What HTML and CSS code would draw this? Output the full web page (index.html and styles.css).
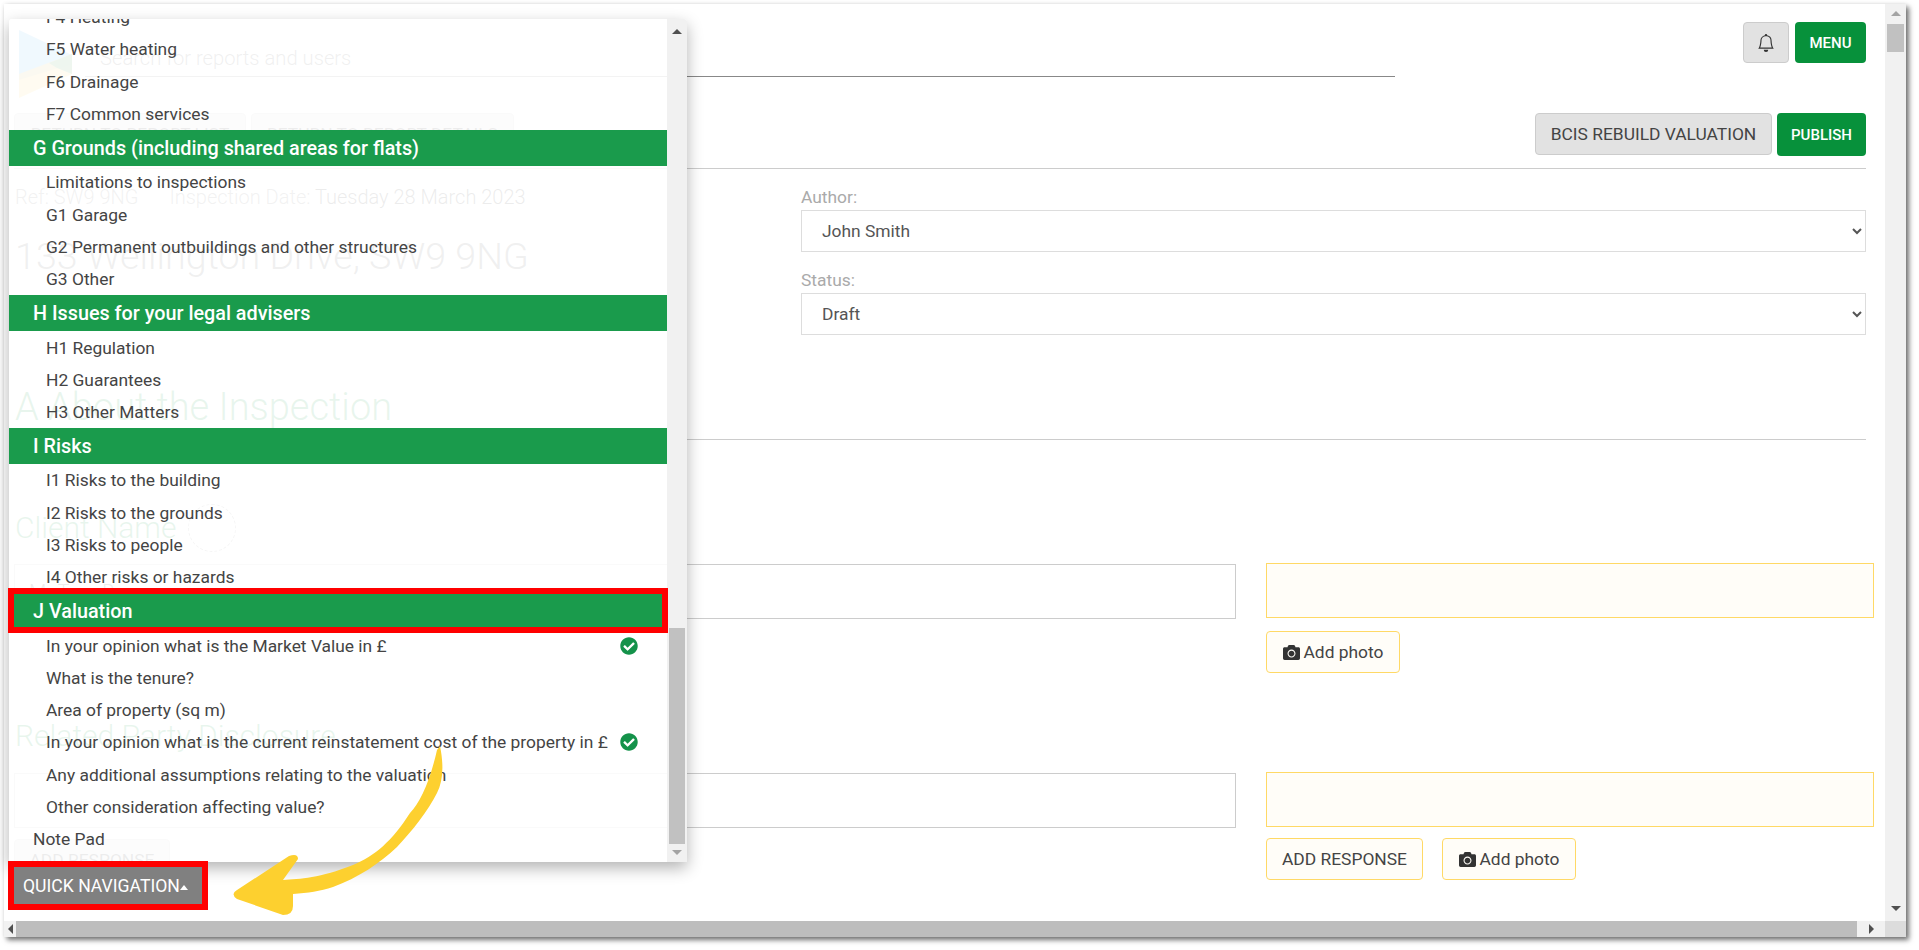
FILE: index.html
```html
<!DOCTYPE html>
<html lang="en">
<head>
    <meta charset="UTF-8">
    <title>Report editor - Quick navigation</title>
    <link rel="stylesheet" href="styles.css">
</head>
<body>
<div class="window">
    <div class="page">
        <div class="topbar">
            <svg class="logo" width="53" height="68" viewBox="0 0 53 68">
                <polygon points="0,0 53,25 53,34 0,50" fill="#2e9fe6" opacity="0.7"/>
                <polygon points="0,44 53,24 53,44 0,68" fill="#ffc83a" opacity="0.7"/>
                <polygon points="30,33 53,24 53,44 38,38" fill="#2f9a58" opacity="0.8"/>
            </svg>
            <div class="search">
                <input type="text" placeholder="Search for reports and users">
            </div>
            <div class="top-actions">
                <button class="btn btn-bell">
                    <svg width="18" height="18" viewBox="0 0 16 16"><path fill="#333" d="M8 16a2 2 0 0 0 2-2H6a2 2 0 0 0 2 2zM8 1.918l-.797.161A4.002 4.002 0 0 0 4 6c0 .628-.134 2.197-.459 3.742-.16.767-.376 1.566-.663 2.258h10.244c-.287-.692-.502-1.49-.663-2.258C12.134 8.197 12 6.628 12 6a4.002 4.002 0 0 0-3.203-3.92L8 1.917zM14.22 12c.223.447.481.801.78 1H1c.299-.199.557-.553.78-1C2.68 10.2 3 6.88 3 6c0-2.42 1.72-4.44 4.005-4.901a1 1 0 1 1 1.99 0A5.002 5.002 0 0 1 13 6c0 .88.32 4.2 1.22 6z"/></svg>
                </button>
                <button class="btn btn-green btn-menu">MENU</button>
            </div>
        </div>

        <div class="toolbar">
            <button class="btn btn-grey btn-list">RETURN TO REPORT LIST</button>
            <button class="btn btn-grey btn-details">RETURN TO REPORT DETAILS</button>
            <button class="btn btn-grey btn-bcis">BCIS REBUILD VALUATION</button>
            <button class="btn btn-green btn-publish">PUBLISH</button>
        </div>

        <div class="details">
            <div>
                <div class="ref-line">
                    <span class="ref-label">Ref:</span> <span class="ref-label">SW9 9NG</span>
                    <span class="ref-label ref-date">Inspection Date:</span> <span>Tuesday 28 March 2023</span>
                </div>
                <h1 class="address">133 Wellington Drive, SW9 9NG</h1>
            </div>
            <div>
                <label class="field-label">Author:</label>
                <select class="field-select"><option>John Smith</option></select>
                <label class="field-label status-label">Status:</label>
                <select class="field-select"><option>Draft</option></select>
            </div>
        </div>

        <h2 class="section-title">A About the Inspection</h2>

        <div class="question question-client">
            <div class="question-head">
                <h3>Client Name</h3>
                <div class="spinner"></div>
            </div>
            <div class="answer-grid">
                <div><input class="answer" type="text" value="Mr Tom Brown"></div>
                <div class="notes">
                    <input class="notes-box" type="text">
                    <div class="notes-actions">
                        <button class="btn btn-note btn-photo">
                            <svg width="17" height="17" viewBox="0 0 512 512"><path fill="#333" d="M512 144v288c0 26.5-21.5 48-48 48H48c-26.5 0-48-21.5-48-48V144c0-26.5 21.5-48 48-48h88l12.3-32.9c7-18.7 24.9-31.1 44.9-31.1h125.5c20 0 37.9 12.4 44.9 31.1L376 96h88c26.5 0 48 21.5 48 48zM376 288c0-66.2-53.8-120-120-120s-120 53.8-120 120 53.8 120 120 120 120-53.8 120-120zm-32 0c0 48.5-39.5 88-88 88s-88-39.5-88-88 39.5-88 88-88 88 39.5 88 88z"/></svg>
                            Add photo
                        </button>
                    </div>
                </div>
            </div>
        </div>

        <div class="question question-party">
            <div class="question-head">
                <h3>Related Party Disclosure</h3>
            </div>
            <div class="answer-grid">
                <div>
                    <input class="answer" type="text">
                    <button class="btn btn-grey btn-response">ADD RESPONSE</button>
                </div>
                <div class="notes">
                    <input class="notes-box" type="text">
                    <div class="notes-actions">
                        <button class="btn btn-note btn-add">ADD RESPONSE</button>
                        <button class="btn btn-note btn-photo">
                            <svg width="17" height="17" viewBox="0 0 512 512"><path fill="#333" d="M512 144v288c0 26.5-21.5 48-48 48H48c-26.5 0-48-21.5-48-48V144c0-26.5 21.5-48 48-48h88l12.3-32.9c7-18.7 24.9-31.1 44.9-31.1h125.5c20 0 37.9 12.4 44.9 31.1L376 96h88c26.5 0 48 21.5 48 48zM376 288c0-66.2-53.8-120-120-120s-120 53.8-120 120 53.8 120 120 120 120-53.8 120-120zm-32 0c0 48.5-39.5 88-88 88s-88-39.5-88-88 39.5-88 88-88 88 39.5 88 88z"/></svg>
                            Add photo
                        </button>
                    </div>
                </div>
            </div>
        </div>
    </div>

    <div class="vbar">
        <span class="arrow arrow-up arrow-light"></span>
        <span class="vbar-thumb"></span>
        <span class="arrow arrow-down"></span>
    </div>
    <div class="hbar">
        <span class="hbar-start"><span class="arrow arrow-left"></span></span>
        <span class="hbar-thumb"></span>
        <span class="hbar-end"><span class="arrow arrow-right"></span></span>
    </div>
    <div class="corner"></div>

    <!-- quick navigation popup, sits over the page -->
    <div class="quick-panel">
        <div class="quick-scroll">
            <ul class="quick-list">
                <li class="item">F4 Heating</li>
                <li class="item">F5 Water heating</li>
                <li class="item">F6 Drainage</li>
                <li class="item">F7 Common services</li>
                <li class="group">G Grounds (including shared areas for flats)</li>
                <li class="item">Limitations to inspections</li>
                <li class="item">G1 Garage</li>
                <li class="item">G2 Permanent outbuildings and other structures</li>
                <li class="item">G3 Other</li>
                <li class="group">H Issues for your legal advisers</li>
                <li class="item">H1 Regulation</li>
                <li class="item">H2 Guarantees</li>
                <li class="item">H3 Other Matters</li>
                <li class="group">I Risks</li>
                <li class="item">I1 Risks to the building</li>
                <li class="item">I2 Risks to the grounds</li>
                <li class="item">I3 Risks to people</li>
                <li class="item">I4 Other risks or hazards</li>
                <li class="group">J Valuation</li>
                <li class="item">In your opinion what is the Market Value in £
                    <svg class="tick" width="18" height="18" viewBox="0 0 512 512"><path fill="#14924a" d="M504 256c0 136.967-111.033 248-248 248S8 392.967 8 256 119.033 8 256 8s248 111.033 248 248zM227.314 387.314l184-184c6.248-6.248 6.248-16.379 0-22.627l-22.627-22.627c-6.248-6.249-16.379-6.25-22.628 0L216 308.118l-70.059-70.059c-6.248-6.248-16.379-6.248-22.628 0l-22.627 22.627c-6.248 6.248-6.248 16.379 0 22.627l104 104c6.249 6.25 16.379 6.25 22.628.001z"/></svg>
                </li>
                <li class="item">What is the tenure?</li>
                <li class="item">Area of property (sq m)</li>
                <li class="item">In your opinion what is the current reinstatement cost of the property in £
                    <svg class="tick" width="18" height="18" viewBox="0 0 512 512"><path fill="#14924a" d="M504 256c0 136.967-111.033 248-248 248S8 392.967 8 256 119.033 8 256 8s248 111.033 248 248zM227.314 387.314l184-184c6.248-6.248 6.248-16.379 0-22.627l-22.627-22.627c-6.248-6.249-16.379-6.25-22.628 0L216 308.118l-70.059-70.059c-6.248-6.248-16.379-6.248-22.628 0l-22.627 22.627c-6.248 6.248-6.248 16.379 0 22.627l104 104c6.249 6.25 16.379 6.25 22.628.001z"/></svg>
                </li>
                <li class="item">Any additional assumptions relating to the valuation</li>
                <li class="item">Other consideration affecting value?</li>
                <li class="note-pad">Note Pad</li>
            </ul>
        </div>
        <div class="quick-bar">
            <span class="arrow arrow-up"></span>
            <span class="quick-thumb"></span>
            <span class="arrow arrow-down arrow-light"></span>
        </div>
    </div>

    <button class="quick-toggle">QUICK NAVIGATION<span class="caret"></span></button>

    <!-- annotations drawn on top of the screenshot -->
    <div class="mark mark-group"></div>
    <div class="mark mark-toggle"></div>
    <svg class="callout" width="240" height="190" viewBox="0 0 240 190">
        <path fill="#fdd02f" d="M210 5 C214 25 213 40 207 52 C198 70 182 90 167 106 C150 122 128 137 103 146 C90 150 78 152 63 153 L63 165 Q63 174 53 174 L7 158 Q0 153 7 149 L59 115 Q68 112 68 118 L53 139 C70 138 90 137 123 124 C145 115 162 100 180 72 C190 62 200 40 207 9 Z"/>
    </svg>
</div>
</body>
</html>
```

FILE: styles.css
```css
* { box-sizing: border-box; }
html, body { height: 100%; }
body { margin: 0; background: #fff; color: #444; font-family: Roboto, "Liberation Sans", sans-serif; font-size: 17.4px; overflow: hidden; }
h1, h2, h3, ul { margin: 0; padding: 0; font-weight: 300; }
button, input, select { font-family: inherit; font-size: 17.4px; color: #444; }

.window { position: relative; display: grid; grid-template-columns: 1881px 21px; grid-template-rows: 917px 16px; width: 1902px; height: 933px; margin: 4px 0 0 4px; background: #fff; box-shadow: 3px 3px 5px rgba(0, 0, 0, 0.55), 0 0 4px rgba(0, 0, 0, 0.08); }
.page { padding: 0 19px 0 10px; overflow: hidden; }

/* top bar */
.topbar { display: flex; align-items: flex-start; height: 109px; padding-top: 18px; }
.logo { flex: none; margin: 8px 0 0 5px; }
.search { width: 1310px; height: 55px; margin-left: 13px; display: flex; align-items: flex-end; border-bottom: 1px solid #888; }
.search input { width: 100%; height: 36px; padding: 0 15px; border: 0; outline: 0; background: transparent; font-size: 20.2px; font-weight: 300; }
.search input::placeholder { color: #666; }
.top-actions { display: flex; gap: 6px; margin-left: auto; }

.btn { height: 42px; padding: 0; border: 1px solid transparent; border-radius: 4px; cursor: pointer; }
.btn-green { background: #07913b; color: #fff; font-size: 15px; font-weight: 500; }
.btn-grey { background: #e2e2e2; border-color: #ccc; color: #444; }
.btn-bell { width: 46px; height: 41px; background: #e2e2e2; border-color: #ccc; display: flex; align-items: center; justify-content: center; }
.btn-menu { width: 71px; height: 41px; }

.toolbar { display: flex; gap: 5px; height: 56px; border-bottom: 1px solid #ccc; }
.btn-list { width: 232px; }
.btn-details { width: 263px; }
.btn-bcis { width: 237px; margin-left: auto; }
.btn-publish { width: 89px; height: 43px; }

/* report details */
.details { display: grid; grid-template-columns: 787px 1fr; padding-top: 17px; }
.ref-line { font-size: 20px; line-height: 22px; padding-left: 1px; color: #444; font-weight: 300; }
.ref-label { color: #777; }
.ref-date { margin-left: 26px; }
.address { margin-top: 26px; font-size: 37.7px; line-height: 44px; padding-left: 1px; color: #666; }
.field-label { display: block; height: 24px; line-height: 22px; color: #aaa; }
.status-label { margin-top: 17px; }
.field-select { display: block; width: 100%; height: 42px; padding: 0 16px; border: 1px solid #ddd; background: #fff; color: #555; }

.section-title { margin-top: 50px; padding: 0 0 10px 1px; font-size: 38px; line-height: 44px; color: #1a9b4c; border-bottom: 1px solid #ccc; }

/* questions */
.question-head { display: flex; align-items: center; gap: 12px; height: 44px; }
.question-head h3 { padding-left: 1px; font-size: 30px; line-height: 44px; color: #1a9b4c; }
.question-client { margin-top: 66px; }
.question-client .question-head { margin-bottom: 14px; }
.question-party { margin-top: 41px; }
.question-party .question-head { margin-bottom: 15px; }
.spinner { width: 48px; height: 48px; border: 1px dashed #999; border-radius: 50%; }

.answer-grid { display: grid; grid-template-columns: 1222px 608px; gap: 30px; margin-right: -8px; }
.answer { display: block; width: 100%; height: 55px; padding: 0 14px; border: 1px solid #ccc; outline: 0; font-size: 20px; font-weight: 300; }
.btn-response { display: block; width: 156px; margin-top: 11px; }
.notes { margin-top: -1px; }
.notes-box { display: block; width: 100%; height: 55px; border: 1px solid #ffd966; outline: 0; background: #fffdf8; }
.notes-actions { display: flex; gap: 19px; margin-top: 13px; }
.question-party .notes-actions { margin-top: 11px; }
.btn-note { height: 42px; border: 1px solid #ffd966; background: #fffdf8; color: #444; display: flex; align-items: center; justify-content: center; gap: 4px; }
.btn-photo { width: 134px; }
.btn-add { width: 157px; }

/* browser scrollbars */
.vbar { grid-column: 2; grid-row: 1; display: flex; flex-direction: column; align-items: center; background: #f1f1f1; }
.vbar .arrow-up { margin: 7px 0 8px; }
.vbar-thumb { width: 17px; height: 28px; background: #c1c1c1; }
.vbar .arrow-down { margin-top: auto; margin-bottom: 10px; }
.hbar { grid-column: 1; grid-row: 2; display: flex; background: #f1f1f1; }
.hbar-start { flex: none; width: 12px; display: flex; align-items: center; justify-content: center; }
.hbar-thumb { flex: 1; background: #bdbdbd; }
.hbar-end { flex: none; width: 28px; display: flex; align-items: center; justify-content: center; }
.corner { grid-column: 2; grid-row: 2; background: #dcdcdc; }
.arrow { flex: none; width: 0; height: 0; border: 5px solid transparent; }
.arrow-up { border-top: 0; border-bottom-color: #505050; }
.arrow-down { border-bottom: 0; border-top-color: #505050; }
.arrow-left { border-left: 0; border-right-color: #505050; }
.arrow-right { border-right: 0; border-left-color: #505050; }
.arrow-up.arrow-light { border-bottom-color: #a3a3a3; }
.arrow-down.arrow-light { border-top-color: #a3a3a3; }

/* quick navigation */
.quick-panel { position: absolute; left: 5px; top: 15px; display: grid; grid-template-columns: 658px 20px; width: 678px; height: 843px; background: rgba(255, 255, 255, 0.9); border-radius: 3px 3px 0 0; box-shadow: 0 6px 16px rgba(0, 0, 0, 0.3); overflow: hidden; }
.quick-scroll { overflow: hidden; }
.quick-list { margin-top: -18px; list-style: none; font-weight: 400; }
.item { display: flex; align-items: center; justify-content: space-between; height: 32.3px; padding: 0 29px 0 37px; color: #444; }
.group { display: flex; align-items: center; height: 36px; padding: 1px 0 0 24px; background: #1a9b4c; color: #fff; font-size: 19.8px; font-weight: 500; }
.note-pad { display: flex; align-items: center; height: 32.3px; padding-left: 24px; color: #444; }
.tick { flex: none; }
.quick-bar { display: flex; flex-direction: column; align-items: center; background: #f1f1f1; }
.quick-bar .arrow-up { margin-top: 10px; }
.quick-thumb { width: 16px; height: 216px; margin-top: auto; background: #c1c1c1; }
.quick-bar .arrow-down { margin: 6px 0 7px; }

.quick-toggle { position: absolute; left: 10px; top: 863px; width: 188px; height: 37px; padding: 0 0 0 9px; display: flex; align-items: center; border: 0; background: #808080; color: #fff; font-size: 17.6px; text-align: left; }
.caret { width: 0; height: 0; margin: 4px 0 0 0; border: 4px solid transparent; border-top: 0; border-bottom: 5px solid #fff; }

.mark { position: absolute; border: 6px solid #f00; }
.mark-group { left: 4px; top: 584px; width: 660px; height: 45px; }
.mark-toggle { left: 4px; top: 857px; width: 200px; height: 49px; }
.callout { position: absolute; left: 226px; top: 737px; }
```
